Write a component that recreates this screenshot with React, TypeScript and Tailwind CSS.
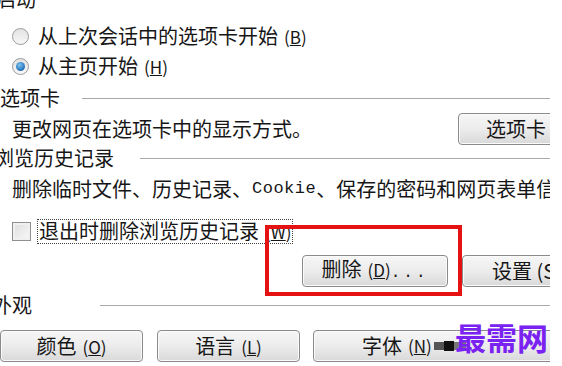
import React from "react";

const cjk = "font-['Noto_Sans_CJK_SC',sans-serif]";

function Radio({ checked }: { checked?: boolean }) {
  return (
    <span className="flex items-center justify-center w-[17px] h-[17px] rounded-full border border-[#9a9a9a] bg-gradient-to-b from-[#e2e2e2] to-[#f8f8f8] shrink-0">
      {checked && (
        <span className="w-[9px] h-[9px] rounded-full bg-[radial-gradient(circle_at_40%_35%,#7fc4f0,#1f6fb8_70%,#194f86)]" />
      )}
    </span>
  );
}

function Key({ k }: { k: string }) {
  return (
    <span className="ml-[6px] text-[17px]">
      (<span className="underline">{k}</span>)
    </span>
  );
}

function Heading({ text, lineLeft, shift }: { text: string; lineLeft: number; shift: string }) {
  return (
    <div className="flex items-center h-[24px] w-[550px]">
      <span className={`whitespace-nowrap ${shift}`}>{text}</span>
      <div className="flex-1 h-px bg-[#a8a8a8]" style={{ marginLeft: lineLeft }} />
    </div>
  );
}

function Button({ children, className }: { children: React.ReactNode; className: string }) {
  return (
    <div
      className={`flex items-center justify-center h-[32px] rounded-[4px] border border-[#8a8a8a] bg-gradient-to-b from-[#f6f6f6] via-[#ececec] to-[#d9d9d9] shadow-[inset_0_0_0_1px_#fbfbfb] shrink-0 ${className}`}
    >
      {children}
    </div>
  );
}

export default function App() {
  return (
    <div className={`relative w-[562px] h-[366px] overflow-hidden bg-white text-[#161616] text-[20px] leading-[24px] ${cjk}`}>
      <div className="flex flex-col">
        <div className="h-[11px] overflow-hidden">
          <div className="-mt-[13px] -ml-[4px]">启动</div>
        </div>

        <div className="mt-[13px] h-[24px] flex items-center pl-[12px] gap-[9px]">
          <Radio />
          <span className="whitespace-nowrap">
            从上次会话中的选项卡开始<Key k="B" />
          </span>
        </div>

        <div className="mt-[6px] h-[24px] flex items-center pl-[12px] gap-[9px]">
          <Radio checked />
          <span className="whitespace-nowrap">
            从主页开始<Key k="H" />
          </span>
        </div>

        <div className="mt-[8px]">
          <Heading text="选项卡" lineLeft={22} shift="" />
        </div>

        <div className="mt-[2px] h-[33px] flex items-center w-[562px]">
          <span className="pl-[12px] whitespace-nowrap">更改网页在选项卡中的显示方式。</span>
          <Button className="ml-auto w-[110px] -mr-[6px] justify-start pl-[27px]">
            <span className="whitespace-nowrap">选项卡 (</span>
          </Button>
        </div>

        <div className="mt-[1px]">
          <Heading text="浏览历史记录" lineLeft={26} shift="-ml-[6px]" />
        </div>

        <div className="mt-[7px] h-[24px] flex items-center pl-[12px] whitespace-nowrap overflow-hidden w-[550px]">
          删除临时文件、历史记录、
          <span className="font-['Liberation_Mono',monospace] text-[17px] tracking-[0.5px]">Cookie</span>
          、保存的密码和网页表单信息
        </div>

        <div className="mt-[18px] h-[24px] flex items-center pl-[12px] gap-[6px]">
          <span className="w-[19px] h-[19px] border border-[#8f8f8f] bg-gradient-to-br from-[#dcdcdc] to-[#fafafa] shadow-[inset_0_0_0_2px_#f0f0f0] shrink-0" />
          <span className="whitespace-nowrap border border-dotted border-[#444] px-[1px] leading-[22px]">
            退出时删除浏览历史记录<Key k="W" />
          </span>
        </div>

        <div className="mt-[12px] h-[32px] flex items-center">
          <Button className="ml-[302px] w-[146px]">
            <span className="whitespace-nowrap">
              删除<Key k="D" />
              <span className="font-['Liberation_Mono',monospace] text-[16px] tracking-[3px]">...</span>
            </span>
          </Button>
          <Button className="ml-[14px] w-[110px] justify-start pl-[29px]">
            <span className="whitespace-nowrap">设置 (S</span>
          </Button>
        </div>

        <div className="mt-[6px]">
          <Heading text="外观" lineLeft={68} shift="-ml-[8px]" />
        </div>

        <div className="mt-[13px] h-[32px] flex items-center">
          <Button className="w-[143px]">
            <span className="whitespace-nowrap">
              颜色<Key k="O" />
            </span>
          </Button>
          <Button className="ml-[14px] w-[143px]">
            <span className="whitespace-nowrap">
              语言<Key k="L" />
            </span>
          </Button>
          <Button className="ml-[13px] w-[250px] justify-start pl-[48px]">
            <span className="whitespace-nowrap flex items-center">
              字体<Key k="N" />
              <span className="ml-[2px] w-[10px] h-[8px] bg-[#555]" />
              <span className="w-[10px] h-[10px] bg-[#111]" />
              <span className="w-[12px] h-[8px] bg-[#777]" />
            </span>
          </Button>
        </div>
      </div>

      <div className="absolute left-[265px] top-[225px] w-[197px] h-[71px] border-[4px] border-[#e41212]" />

      <div className="absolute right-0 top-0 w-[12px] h-full bg-white" />

      <div className="absolute left-[455px] top-[319px] text-[31px] leading-[36px] font-semibold text-[#7a22f2] whitespace-nowrap">
        最需网
      </div>
    </div>
  );
}
